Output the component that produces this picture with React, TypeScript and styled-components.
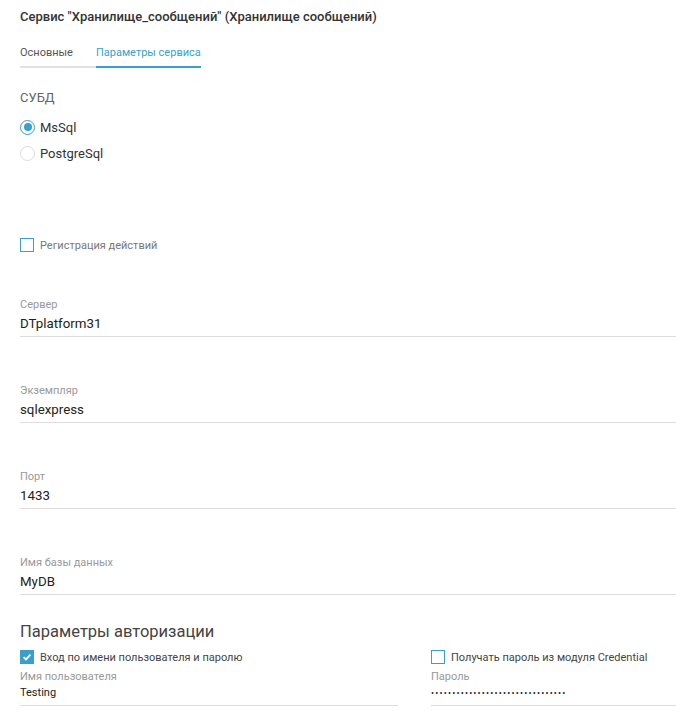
import React from 'react';
import styled, { createGlobalStyle } from 'styled-components';

const Global = createGlobalStyle`
    body {
        margin: 0;
        background: #fff;
        font-family: Roboto, "Noto Sans", Arial, sans-serif;
        color: #333;
    }
`

const BLUE = '#3a9fca';

export const Page = styled.div`
    display: flex;
    flex-direction: column;
    padding-left: 20px;
    width: 656px;
    overflow: hidden;
`
export const Title = styled.h1`
    margin: 0;
    padding-top: 7px;
    font-size: 13px;
    line-height: 20px;
    font-weight: 500;
    color: #333;
`
export const Tabs = styled.div`
    display: flex;
    margin-top: 12px;
`
export const Tab = styled.div<{ $active?: boolean }>`
    font-size: 11px;
    line-height: 27px;
    padding-right: 23px;
    color: ${p => (p.$active ? BLUE : '#555')};
    border-bottom: 2px solid ${p => (p.$active ? BLUE : '#e0e0e0')};
    &:last-child {
        padding-right: 0;
    }
`
export const GroupLabel = styled.div`
    margin-top: 20px;
    font-size: 13px;
    line-height: 20px;
    color: #666;
`
export const RadioGroup = styled.div`
    display: flex;
    flex-direction: column;
    margin-top: 6px;
`
export const RadioRow = styled.label`
    display: flex;
    align-items: center;
    gap: 5px;
    height: 26px;
    font-size: 13px;
    color: #333;
`
export const RadioCircle = styled.span<{ $checked?: boolean }>`
    box-sizing: border-box;
    width: 15px;
    height: 15px;
    border-radius: 50%;
    border: 1.5px solid ${p => (p.$checked ? BLUE : '#dcdcdc')};
    display: flex;
    align-items: center;
    justify-content: center;
    &::after {
        content: '';
        width: 8px;
        height: 8px;
        border-radius: 50%;
        background: ${p => (p.$checked ? BLUE : 'transparent')};
    }
`
export const CheckRow = styled.label<{ $mt?: number }>`
    display: flex;
    align-items: center;
    gap: 6px;
    height: 20px;
    margin-top: ${p => p.$mt ?? 0}px;
    font-size: 11px;
    color: ${p => (p.$mt ? '#777' : '#444')};
`
export const Box = styled.span<{ $checked?: boolean }>`
    box-sizing: border-box;
    width: 14px;
    height: 14px;
    border: 1.5px solid ${BLUE};
    background: ${p => (p.$checked ? BLUE : '#fff')};
    display: flex;
    align-items: center;
    justify-content: center;
`
export const Field = styled.div<{ $mt: number }>`
    display: flex;
    flex-direction: column;
    margin-top: ${p => p.$mt}px;
`
export const FieldLabel = styled.div`
    font-size: 11px;
    line-height: 16px;
    color: #999;
`
export const FieldValue = styled.div`
    margin-top: 1px;
    padding-bottom: 2px;
    font-size: 13.3px;
    line-height: 20px;
    color: #222;
    border-bottom: 1px solid #ddd;
`
export const Heading = styled.h2`
    margin: 25px 0 0 0;
    font-size: 16.5px;
    line-height: 24px;
    font-weight: 400;
    color: #444;
`
export const Columns = styled.div`
    display: grid;
    grid-template-columns: 378px 1fr;
    column-gap: 33px;
    margin-top: 3px;
`
export const Column = styled.div`
    display: flex;
    flex-direction: column;
`
export const SmallLabel = styled.div`
    margin-top: 3px;
    font-size: 11px;
    line-height: 14px;
    color: #999;
`
export const SmallValue = styled.div<{ $dots?: boolean }>`
    margin-top: 1px;
    padding-bottom: 4px;
    font-size: ${p => (p.$dots ? '9px' : '11px')};
    letter-spacing: ${p => (p.$dots ? '1.2px' : 'normal')};
    line-height: 16px;
    color: #222;
    border-bottom: 1px solid #ddd;
`

const Check = () => (
    <svg width="10" height="10" viewBox="0 0 10 10">
        <path d="M1.6 5.2 L4 7.4 L8.4 2.6" fill="none" stroke="#fff" strokeWidth="1.8" />
    </svg>
)

const fields = [
    { label: 'Сервер', value: 'DTplatform31' },
    { label: 'Экземпляр', value: 'sqlexpress' },
    { label: 'Порт', value: '1433' },
    { label: 'Имя базы данных', value: 'MyDB' },
];

const App = () => {
    return (
        <>
            <Global />
            <Page>
                <Title>Сервис "Хранилище_сообщений" (Хранилище сообщений)</Title>
                <Tabs>
                    <Tab>Основные</Tab>
                    <Tab $active>Параметры сервиса</Tab>
                </Tabs>

                <GroupLabel>СУБД</GroupLabel>
                <RadioGroup>
                    <RadioRow><RadioCircle $checked />MsSql</RadioRow>
                    <RadioRow><RadioCircle />PostgreSql</RadioRow>
                </RadioGroup>

                <CheckRow $mt={69}><Box />Регистрация действий</CheckRow>

                {fields.map((f, i) => (
                    <Field key={f.label} $mt={i === 0 ? 42 : 46}>
                        <FieldLabel>{f.label}</FieldLabel>
                        <FieldValue>{f.value}</FieldValue>
                    </Field>
                ))}

                <Heading>Параметры авторизации</Heading>
                <Columns>
                    <Column>
                        <CheckRow><Box $checked><Check /></Box>Вход по имени пользователя и паролю</CheckRow>
                        <SmallLabel>Имя пользователя</SmallLabel>
                        <SmallValue>Testing</SmallValue>
                    </Column>
                    <Column>
                        <CheckRow><Box />Получать пароль из модуля Credential</CheckRow>
                        <SmallLabel>Пароль</SmallLabel>
                        <SmallValue $dots>{'•'.repeat(32)}</SmallValue>
                    </Column>
                </Columns>
            </Page>
        </>
    );
};

export default App;
